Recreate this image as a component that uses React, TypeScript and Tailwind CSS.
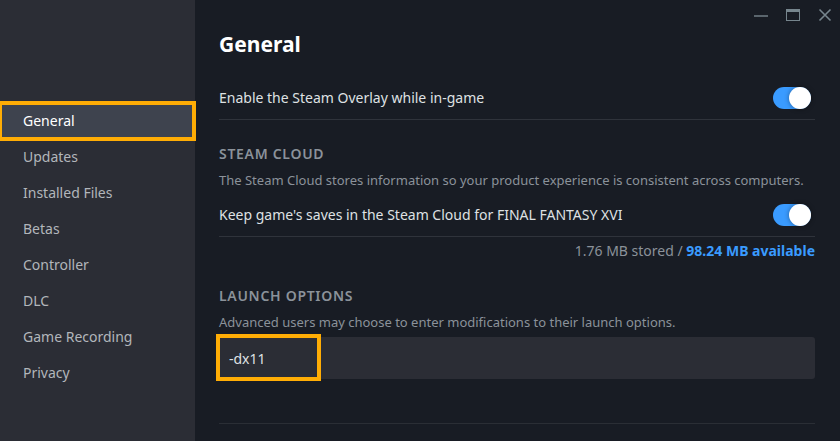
import { useState } from "react";

const tabs = [
  "General",
  "Updates",
  "Installed Files",
  "Betas",
  "Controller",
  "DLC",
  "Game Recording",
  "Privacy",
];

const Sidebar = () => {
  const [active, setActive] = useState("General");

  return (
    <nav className="flex w-[195px] shrink-0 flex-col bg-[#2b2d35] pt-[103px]">
      {tabs.map((tab) => (
        <button
          key={tab}
          onClick={() => setActive(tab)}
          className={
            tab === active
              ? "relative h-9 bg-[#3e434e] pl-[23px] text-left text-sm text-white"
              : "relative h-9 pl-[23px] text-left text-sm text-[#b2b6bb]"
          }
        >
          {tab}
          {/* highlight frame */}
          {tab === "General" && (
            <span className="pointer-events-none absolute -top-0.5 -right-px -bottom-0.5 -left-0.5 border-4 border-[#ffad05]" />
          )}
        </button>
      ))}
    </nav>
  );
};

const WindowControls = () => (
  <div className="flex h-[30px] items-center justify-end gap-[18px] pr-2 text-[#76858d]">
    <button aria-label="Minimize">
      <svg width="14" height="14" viewBox="0 0 14 14" className="block">
        <path d="M0 7h14v2H0z" fill="currentColor" fillOpacity="0.7" />
      </svg>
    </button>
    <button aria-label="Maximize">
      <svg width="14" height="14" viewBox="0 0 14 14" className="block">
        <path d="M0 1h14v12H0zM1 4v8h12V4z" fill="currentColor" fillRule="evenodd" />
      </svg>
    </button>
    <button aria-label="Close">
      <svg width="14" height="14" viewBox="0 0 14 14" className="block">
        <path d="M1.5 1.5l11 11M12.5 1.5l-11 11" stroke="currentColor" strokeWidth="1.6" />
      </svg>
    </button>
  </div>
);

const ToggleRow = ({ label, className }: { label: string; className?: string }) => (
  <label className={`flex h-11 items-center justify-between border-b border-[#2f333b] pr-1 ${className ?? ""}`}>
    <span className="text-sm text-[#dfe1e3]">{label}</span>
    <input
      type="checkbox"
      role="switch"
      defaultChecked
      className="h-[22px] w-[38px] shrink-0 appearance-none rounded-full bg-[#3d4450] before:block before:size-[22px] before:rounded-full before:bg-white before:shadow-[0_0_5px_rgba(0,0,0,0.4)] checked:bg-[#3a9bff] checked:before:ml-4"
    />
  </label>
);

const SectionTitle = ({ title, text }: { title: string; text: string }) => (
  <>
    <h2 className="text-sm leading-5 font-semibold tracking-wider text-[#8b929a] uppercase">{title}</h2>
    <p className="mt-1 text-[13px] leading-[25px] text-[#8b929a]">{text}</p>
  </>
);

const App = () => {
  return (
    <div className="flex min-h-screen overflow-hidden bg-[#181c24] font-['Noto_Sans',sans-serif]">
      <Sidebar />

      <div className="min-w-0 flex-1">
        <WindowControls />

        <main className="pr-[25px] pl-6">
          <h1 className="text-[21px] leading-7 font-bold text-white">General</h1>
          <ToggleRow label="Enable the Steam Overlay while in-game" className="mt-[18px]" />

          <section className="mt-6">
            <SectionTitle
              title="Steam Cloud"
              text="The Steam Cloud stores information so your product experience is consistent across computers."
            />
            <ToggleRow label="Keep game's saves in the Steam Cloud for FINAL FANTASY XVI" />
            <p className="text-right text-sm leading-7 text-[#8b929a]">
              1.76 MB stored / <b className="font-bold text-[#3a9bff]">98.24 MB available</b>
            </p>
          </section>

          <section className="mt-[21px]">
            <SectionTitle
              title="Launch Options"
              text="Advanced users may choose to enter modifications to their launch options."
            />
            <div className="relative mt-0.5">
              <input
                type="text"
                aria-label="Launch Options"
                defaultValue="-dx11"
                className="block h-[42px] w-full rounded-[3px] bg-[#2b2d35] px-2.5 text-sm text-[#dfe1e3] outline-none"
              />
              <span className="pointer-events-none absolute -top-[3px] -left-[3px] h-[47px] w-[105px] border-4 border-[#ffad05]" />
            </div>
          </section>

          <hr className="mt-11 border-[#2a2e35]" />
        </main>
      </div>
    </div>
  );
};

export default App;
